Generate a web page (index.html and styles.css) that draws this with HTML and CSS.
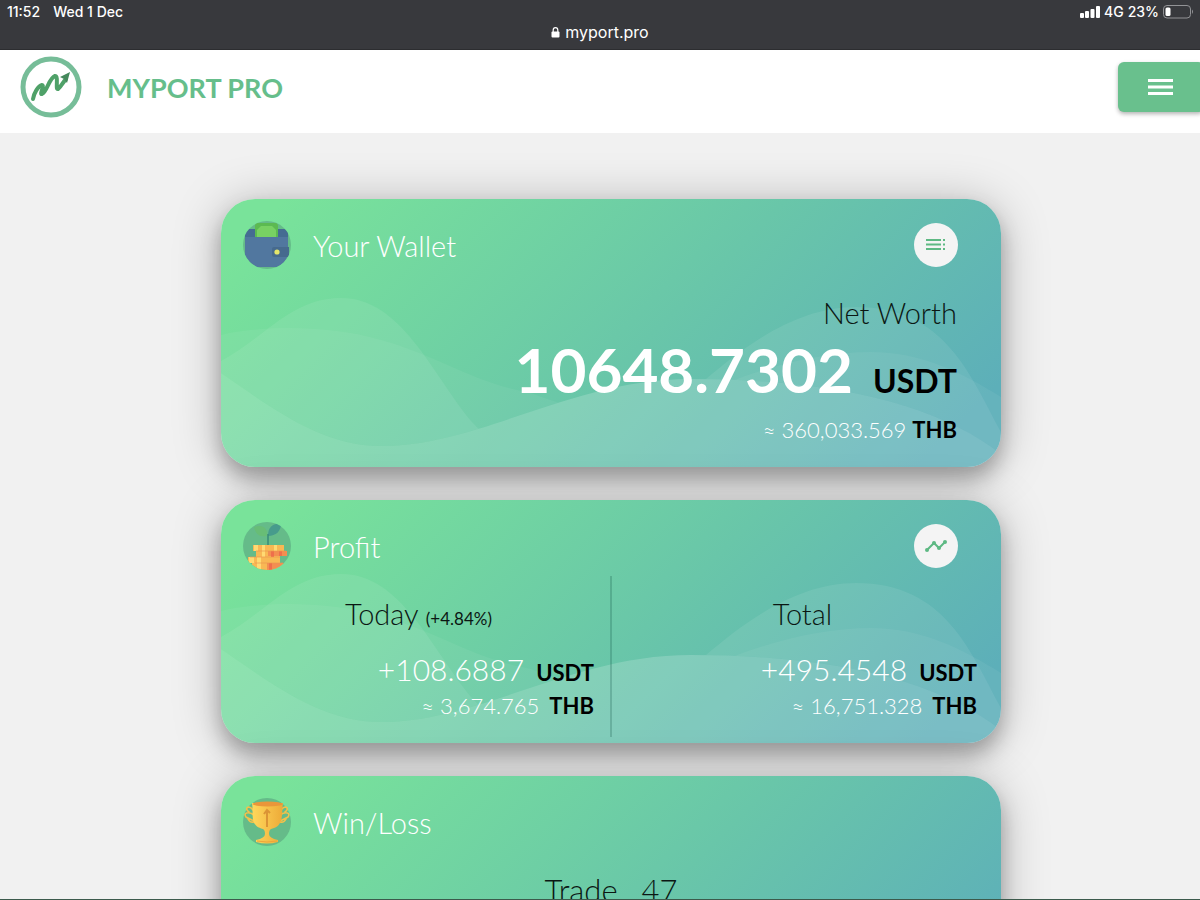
FILE: index.html
```html
<!DOCTYPE html>
<html lang="en">
<head>
    <meta charset="UTF-8">
    <meta name="viewport" content="width=device-width, initial-scale=1.0">
    <title>MYPORT PRO</title>
    <link rel="stylesheet" href="styles.css">
</head>
<body>
    <!-- Shared wave artwork -->
    <svg class="defs" width="0" height="0" aria-hidden="true">
        <defs>
            <clipPath id="aboveFront">
                <path d="M0 0H780V167C720 120 620 92 470 92C350 92 260 159 160 159C100 159 50 120 0 86Z"/>
            </clipPath>
            <symbol id="waves" viewBox="0 0 780 180" preserveAspectRatio="none">
                <g clip-path="url(#aboveFront)" fill="#fff">
                    <path fill-opacity=".08" d="M0 74C45 50 70 11 120 11C180 11 210 85 250 134C300 190 380 190 430 140C470 110 545 20 635 20C725 20 750 90 780 145V180H0Z"/>
                    <path fill-opacity=".05" d="M0 48C30 40 100 36 160 53C220 70 250 95 310 106C370 130 420 130 450 122C520 85 590 65 650 65C700 65 740 85 780 110V180H0Z"/>
                </g>
                <path fill="#fff" fill-opacity=".18" d="M0 86C50 120 100 159 160 159C260 159 350 92 470 92C620 92 720 120 780 167V180H0Z"/>
            </symbol>
        </defs>
    </svg>

    <div class="screen">
        <div class="statusbar">
            <div class="status-row">
                <div class="status-left"><span>11:52</span><span>Wed 1 Dec</span></div>
                <div class="status-right">
                    <svg width="20" height="12" viewBox="0 0 20 12" fill="#fff"><rect x="0" y="7" width="4" height="5" rx="1"/><rect x="5" y="5" width="4" height="7" rx="1"/><rect x="10.500" y="3" width="4" height="9" rx="1"/><rect x="16" y="0" width="4" height="12" rx="1"/></svg>
                    <span>4G</span>
                    <span>23%</span>
                    <svg width="31" height="14" viewBox="0 0 31 14"><rect x=".5" y=".5" width="27" height="12.500" rx="3.500" fill="none" stroke="#929396"/><rect x="2.500" y="2.500" width="5" height="8.500" rx="1.500" fill="#fff"/><path d="M29 4.500q2 2.200 0 4.500z" fill="#929396"/></svg>
                </div>
            </div>
            <div class="address">
                <svg width="9" height="11" viewBox="0 0 9 11"><rect x=".5" y="4.500" width="8" height="6" rx="1" fill="#fff"/><path d="M2.200 5V3a2.300 2.300 0 0 1 4.600 0v2" fill="none" stroke="#fff" stroke-width="1.200"/></svg>
                <span>myport.pro</span>
            </div>
        </div>

        <header class="navbar">
            <a class="brand" href="#">
                <svg width="62" height="62" viewBox="0 0 62 62" fill="none">
                    <circle cx="31" cy="31" r="28" stroke="#76bd98" stroke-width="5"/>
                    <path d="M13 43C14 37 18 30 22 29C25 29 19 39 22 38C27 36 29 22 35 20C39 20 35 34 38 33C41 31 43 26 46 23" stroke="#4fa168" stroke-width="4" stroke-linecap="round" stroke-linejoin="round"/>
                    <path d="M40 21L50 16L47 27L44 23Z" fill="#45895c"/>
                </svg>
                <span>MYPORT PRO</span>
            </a>
            <button class="menu-button" type="button" aria-label="Menu">
                <svg width="26" height="18" viewBox="0 0 26 18" fill="#fff"><path d="M0 1h25v3H0zM0 7.500h25v3H0zM0 14h25v3H0z"/></svg>
            </button>
        </header>

        <main class="content">
            <section class="card">
                <svg class="card-waves" aria-hidden="true"><use href="#waves"/></svg>
                <div class="card-header">
                    <svg class="card-icon" viewBox="0 0 48 48">
                        <defs><clipPath id="round"><circle cx="24" cy="24" r="24"/></clipPath></defs>
                        <circle cx="24" cy="24" r="24" fill="#65bb89"/>
                        <g clip-path="url(#round)">
                            <path d="M2 12q0-4 4-4h35q4 0 4 4v5H2z" fill="#456c92"/>
                            <path d="M12 16V5q0-3 3-3h17q3 0 3 3v11z" fill="#5cba51"/>
                            <path d="M14 16V9l4-4h11l4 4v7z" fill="#78d163"/>
                            <path d="M2 16h43v18Q42 43 34 46H14Q5 43 2 34z" fill="#51779f"/>
                            <path d="M46 26H31q-2 0-2 2v6q0 2 2 2h15V26z" fill="#466a8e"/>
                            <circle cx="34" cy="31" r="2.600" fill="#e4e66b"/>
                        </g>
                    </svg>
                    <h2>Your Wallet</h2>
                    <button class="round-button" type="button" aria-label="Wallet details">
                        <svg width="20" height="12" viewBox="0 0 20 12" fill="#5eb983"><path d="M0 0h15v2H0zM0 4.500h15v2H0zM0 9h15v2H0zM17 0h2v2h-2zM17 4.500h2v2h-2zM17 9h2v2h-2z"/></svg>
                    </button>
                </div>
                <div class="worth">
                    <h3>Net Worth</h3>
                    <p class="worth-main"><span>10648.7302</span> <b>USDT</b></p>
                    <p class="worth-sub"><span>≈ 360,033.569</span> <b>THB</b></p>
                </div>
            </section>

            <section class="card">
                <svg class="card-waves" aria-hidden="true"><use href="#waves"/></svg>
                <div class="card-header">
                    <svg class="card-icon" viewBox="0 0 48 48">
                        <circle cx="24" cy="24" r="24" fill="#65bb89"/>
                        <g clip-path="url(#round)">
                            <path d="M24 14C13 16 12 8 11 5C20 2 25 6 24 14Z" fill="#68bd76"/>
                            <path d="M25 14C25 5 30 1 38 2C38 9 33 14 25 14Z" fill="#479b8c"/>
                            <path d="M25 23V12" stroke="#398b78" stroke-width="1.500"/>
                            <path d="M10 23h31v6h3v5h-7v7h3v8H9v-8H5v-6h8v-6h-3z" fill="#f8b854"/>
                            <path d="M25 29h19v5H25zM24 41h17v7H24z" fill="#f38e51"/>
                            <path d="M11 23h4v6h-4zM19 23h3v12h-3zM6 35h5v6H6zM14 35h4v13h-4zM31 23h3v6h-3z" fill="#ffda73"/>
                            <path d="M28 29h3v6h-3zM36 29h3v5h-3zM26 41h3v7h-3z" fill="#ee6f4b"/>
                            <path d="M7 35h30M12 41h28M13 29h30" stroke="#eb9650" stroke-width=".7"/>
                        </g>
                    </svg>
                    <h2>Profit</h2>
                    <button class="round-button" type="button" aria-label="Profit chart">
                        <svg width="24" height="14" viewBox="0 0 24 14" fill="#5eb983"><path d="M3 11L10 4L15 9L21 3" fill="none" stroke="#5eb983" stroke-width="2"/><circle cx="3" cy="11" r="2"/><circle cx="10" cy="4" r="2"/><circle cx="15" cy="9" r="2"/><circle cx="21" cy="3" r="2"/></svg>
                    </button>
                </div>
                <div class="profit">
                    <div class="profit-col">
                        <h3>Today <small>(+4.84%)</small></h3>
                        <p class="profit-main"><span>+108.6887</span> <b>USDT</b></p>
                        <p class="profit-sub"><span>≈ 3,674.765</span> <b>THB</b></p>
                    </div>
                    <div class="profit-col">
                        <h3>Total</h3>
                        <p class="profit-main"><span>+495.4548</span> <b>USDT</b></p>
                        <p class="profit-sub"><span>≈ 16,751.328</span> <b>THB</b></p>
                    </div>
                </div>
            </section>

            <section class="card card-tall">
                <div class="card-header">
                    <svg class="card-icon" viewBox="0 0 48 48">
                        <defs><linearGradient id="gold"><stop stop-color="#ffd85c"/><stop offset="1" stop-color="#edaa38"/></linearGradient></defs>
                        <circle cx="24" cy="24" r="24" fill="#65bb89"/>
                        <g fill="none" stroke="#f2c14b" stroke-width="1.600" stroke-linecap="round">
                            <path d="M10 12C5 6 1 11 6 14M11 17C5 13 0 15 3 19L11 23M5 21q2 4 6 3M38 12C43 6 47 11 42 14M37 17C43 13 48 15 45 19L37 23M43 21q-2 4-6 3"/>
                        </g>
                        <path d="M9 5H40C38 16 42 28 28 31Q26 32 26 36Q26 40 35 42V44Q24 47 13 44V42Q22 40 22 36Q22 32 20 31C6 28 11 16 9 5Z" fill="url(#gold)"/>
                        <ellipse cx="24.500" cy="6" rx="15" ry="2.500" fill="#e9963a"/>
                        <path d="M24 29V13M21 16L24 12L27 15" fill="none" stroke="#db9435" stroke-width="2"/>
                        <path d="M14 43q10 2 20 0" fill="none" stroke="#eda63b"/>
                    </svg>
                    <h2>Win/Loss</h2>
                </div>
                <p class="trade"><span>Trade</span><span>47</span></p>
            </section>
        </main>
    </div>
</body>
</html>
```

FILE: styles.css
```css
* {
    box-sizing: border-box;
}
body {
    margin: 0;
    background-color: #f1f1f1;
    font-family: Lato, "Open Sans", sans-serif;
}
h2, h3, p {
    margin: 0;
    font-weight: 300;
}
.defs {
    position: absolute;
}
.screen {
    height: 100vh;
    overflow: hidden;
    border-bottom: 1px solid #3c5a4c;
}

/* Tablet status bar */
.statusbar {
    height: 50px;
    background-color: #38393d;
    border-bottom: 1px solid #2c2d30;
    color: #fff;
    font-family: Inter, sans-serif;
    font-size: 14px;
    font-weight: 500;
}
.status-row {
    display: flex;
    justify-content: space-between;
    align-items: center;
    height: 23px;
    padding: 0 6px 0 7px;
}
.status-left {
    display: flex;
    gap: 13px;
}
.status-right {
    display: flex;
    align-items: center;
    gap: 4px;
}
.address {
    display: flex;
    justify-content: center;
    align-items: center;
    gap: 5px;
    height: 18px;
    font-size: 16px;
    font-weight: 400;
}

/* Site header */
.navbar {
    display: flex;
    justify-content: space-between;
    align-items: center;
    height: 83px;
    padding: 0 0 9px 20px;
    background-color: #fff;
}
.brand {
    display: flex;
    align-items: center;
    gap: 25px;
    color: #66be8b;
    font-size: 27px;
    font-weight: 700;
    text-decoration: none;
}
.menu-button {
    display: flex;
    justify-content: center;
    align-items: center;
    width: 86px;
    height: 50px;
    margin-right: -4px;
    border: none;
    border-radius: 6px;
    background-color: #69c08d;
    box-shadow: 0 2px 4px rgba(0, 0, 0, 0.3);
    cursor: pointer;
}

/* Cards */
.content {
    display: flex;
    flex-direction: column;
    gap: 33px;
    max-width: 824px;
    margin: 0 auto;
    padding: 66px 11px 0 33px;
}
.card {
    position: relative;
    padding: 22px 0 18px;
    border-radius: 34px;
    background: linear-gradient(135deg, #79e39a 6%, #69c6a9 54%, #5dafb9 92%);
    box-shadow: 0 4px 48px rgba(0, 0, 0, 0.25), 0 12px 20px rgba(0, 0, 0, 0.25);
}
.card-tall {
    padding-bottom: 120px;
}
.card-waves {
    position: absolute;
    left: 0;
    bottom: 0;
    width: 100%;
    height: 180px;
    border-radius: 0 0 34px 34px;
}
.card-header {
    position: relative;
    display: flex;
    align-items: center;
    gap: 22px;
    height: 48px;
    padding: 0 43px 0 22px;
}
.card-icon {
    width: 48px;
    height: 48px;
}
.card h2 {
    color: #fff;
    font-size: 29px;
}
.card h3 {
    color: #0b1713;
    font-size: 29px;
    line-height: 36px;
}
.round-button {
    display: flex;
    justify-content: center;
    align-items: center;
    width: 44px;
    height: 44px;
    margin-left: auto;
    padding: 0;
    border: none;
    border-radius: 50%;
    background-color: #f4f4f4;
    cursor: pointer;
}
.card b {
    color: #000;
    font-weight: 700;
    line-height: 1;
}

/* Wallet */
.worth {
    position: relative;
    padding: 26px 44px 0 22px;
    text-align: right;
}
.worth-main {
    color: #fff;
    font-size: 62px;
    font-weight: 700;
    line-height: 76px;
}
.worth-main b {
    margin-left: 5px;
    font-size: 32px;
}
.worth-sub {
    margin-top: 4px;
    color: #fff;
    font-size: 22px;
    line-height: 38px;
}

/* Profit */
.profit {
    position: relative;
    display: grid;
    grid-template-columns: 1fr 1fr;
    margin: 6px 8px -12px 6px;
}
.profit-col {
    padding: 20px 16px 14px;
    text-align: right;
}
.profit-col + .profit-col {
    border-left: 2px solid rgba(0, 60, 50, 0.2);
}
.profit-col h3 {
    text-align: center;
}
.profit-col small {
    font-size: 17px;
    font-weight: 400;
    line-height: 1;
}
.profit-main {
    margin-top: 17px;
    color: #fff;
    font-size: 30px;
    line-height: 40px;
}
.profit-main b,
.profit-sub b {
    margin-left: 4px;
    font-size: 22px;
}
.profit-sub {
    color: #fff;
    font-size: 22px;
    line-height: 34px;
}

/* Win/Loss */
.trade {
    display: flex;
    justify-content: center;
    gap: 24px;
    padding-top: 22px;
    color: #0b1713;
    font-size: 31px;
    line-height: 44px;
}
```
